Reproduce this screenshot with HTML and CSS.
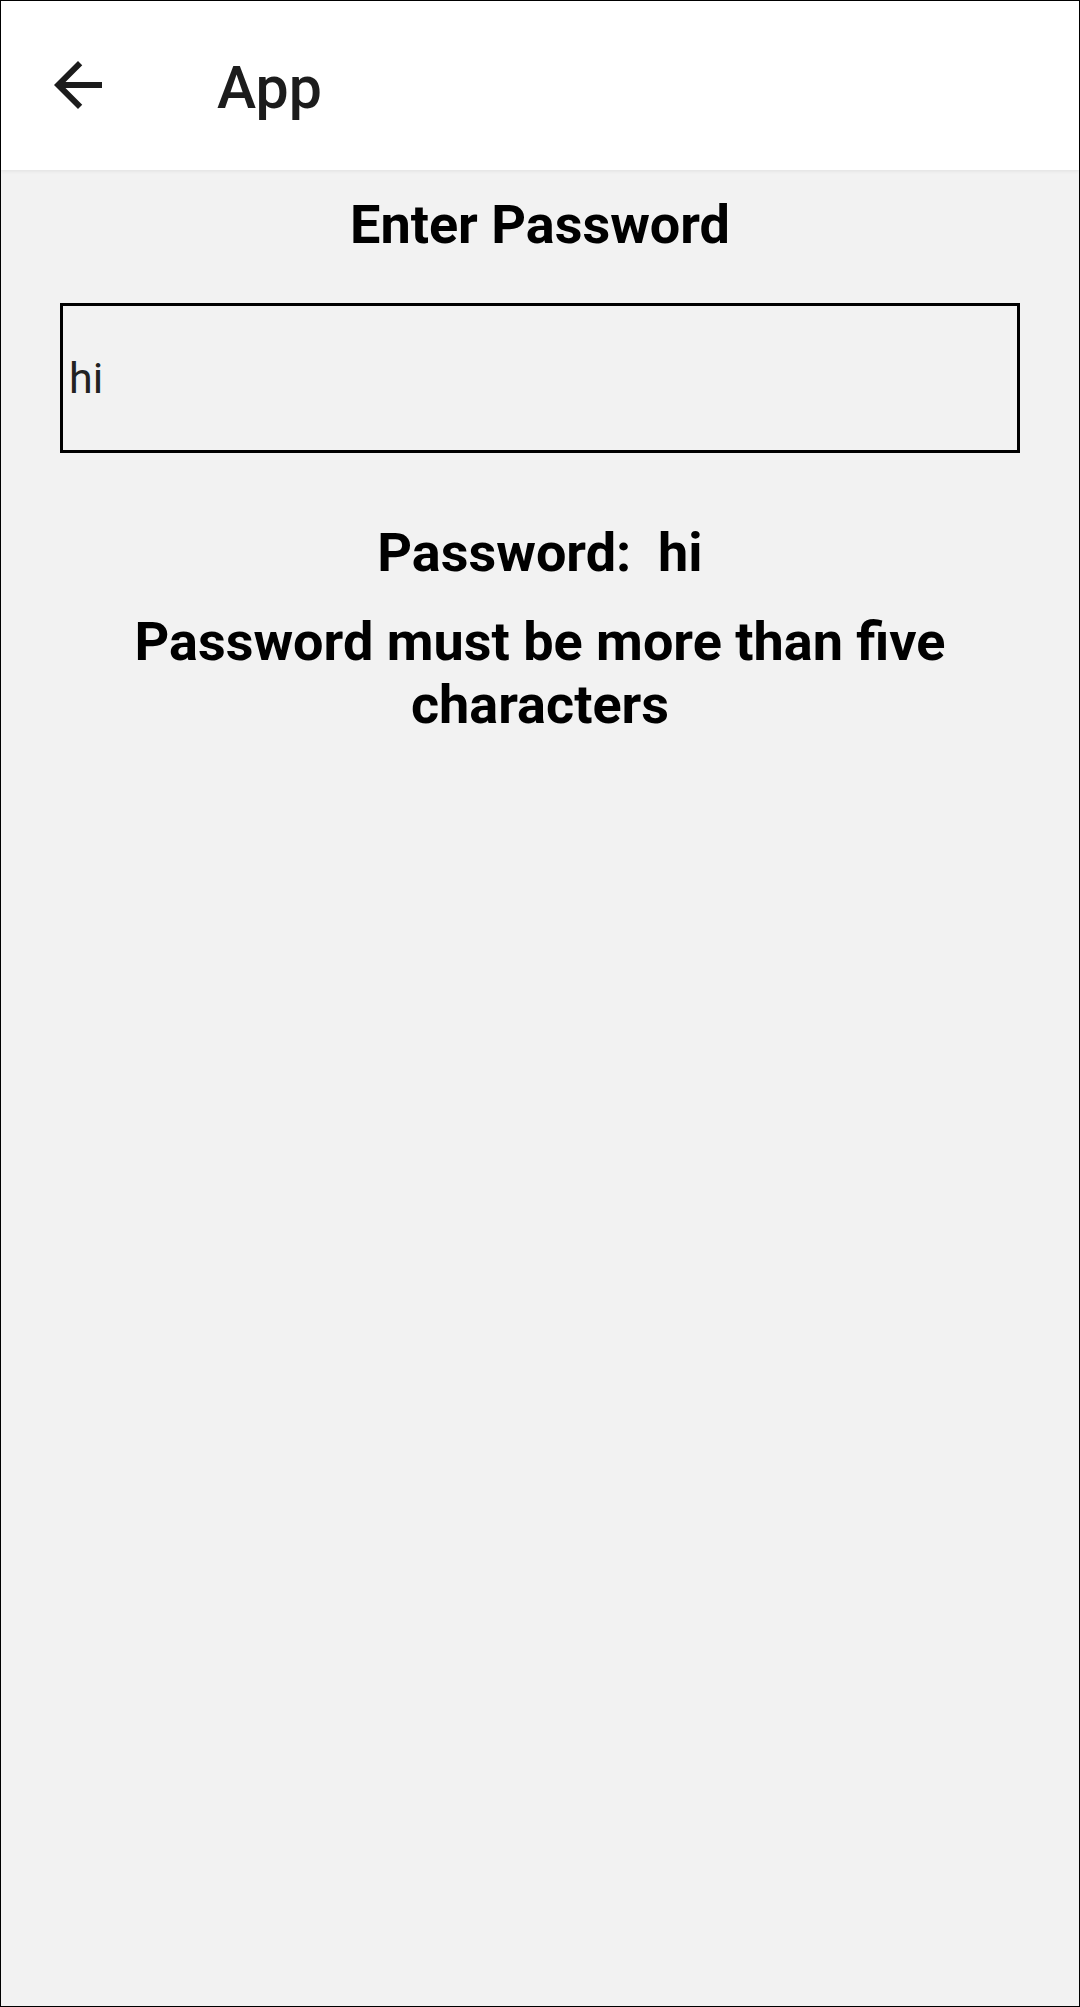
FILE: index.html
```html
<!DOCTYPE html>
<html>
<head>
<meta charset="utf-8">
<link rel="stylesheet" href="styles.css">
</head>
<body>
<div class="frame">
  <header class="toolbar">
    <svg class="back" viewBox="0 0 24 24" width="72" height="72"><path d="M20 11H7.83l5.59-5.59L12 4l-8 8 8 8 1.41-1.41L7.83 13H20v-2z" fill="#1c1c1c"/></svg>
    <span class="title">App</span>
  </header>
  <main class="content">
    <h1 class="heading">Enter Password</h1>
    <div class="field">hi</div>
    <p class="echo">Password:&nbsp; hi</p>
    <p class="error">Password must be more than five characters</p>
  </main>
</div>
</body>
</html>
```
FILE: styles.css
```css
html, body {
  margin: 0;
  padding: 0;
}
body {
  background: #f2f2f2;
  font-family: Roboto, "Noto Sans", sans-serif;
}
.frame {
  box-sizing: border-box;
  width: 1080px;
  height: 2007px;
  border: 1px solid #000;
  background: #f2f2f2;
  overflow: hidden;
}
.toolbar {
  height: 169px;
  background: #fff;
  display: flex;
  align-items: center;
  box-shadow: 0 1px 4px rgba(0,0,0,0.08);
  position: relative;
}
.back {
  margin-left: 41px;
  margin-top: -2px;
  flex: none;
}
.title {
  margin-left: 103px;
  margin-top: 3px;
  font-size: 59px;
  font-weight: 500;
  color: #1c1c1c;
}
.content {
  display: flex;
  flex-direction: column;
  align-items: center;
  padding: 0 59px;
}
.heading {
  margin: 23px 0 0;
  font-size: 54px;
  font-weight: 700;
  line-height: 64px;
  color: #000;
}
.field {
  box-sizing: border-box;
  align-self: stretch;
  margin-top: 46px;
  height: 150px;
  border: 3px solid #000;
  padding-left: 6px;
  display: flex;
  align-items: center;
  font-size: 43px;
  color: #222;
}
.echo {
  margin: 68px 0 0;
  font-size: 54px;
  font-weight: 700;
  line-height: 64px;
  color: #000;
}
.error {
  margin: 25px 0 0;
  font-size: 54px;
  font-weight: 700;
  line-height: 63px;
  text-align: center;
  color: #000;
  max-width: 860px;
}
```
